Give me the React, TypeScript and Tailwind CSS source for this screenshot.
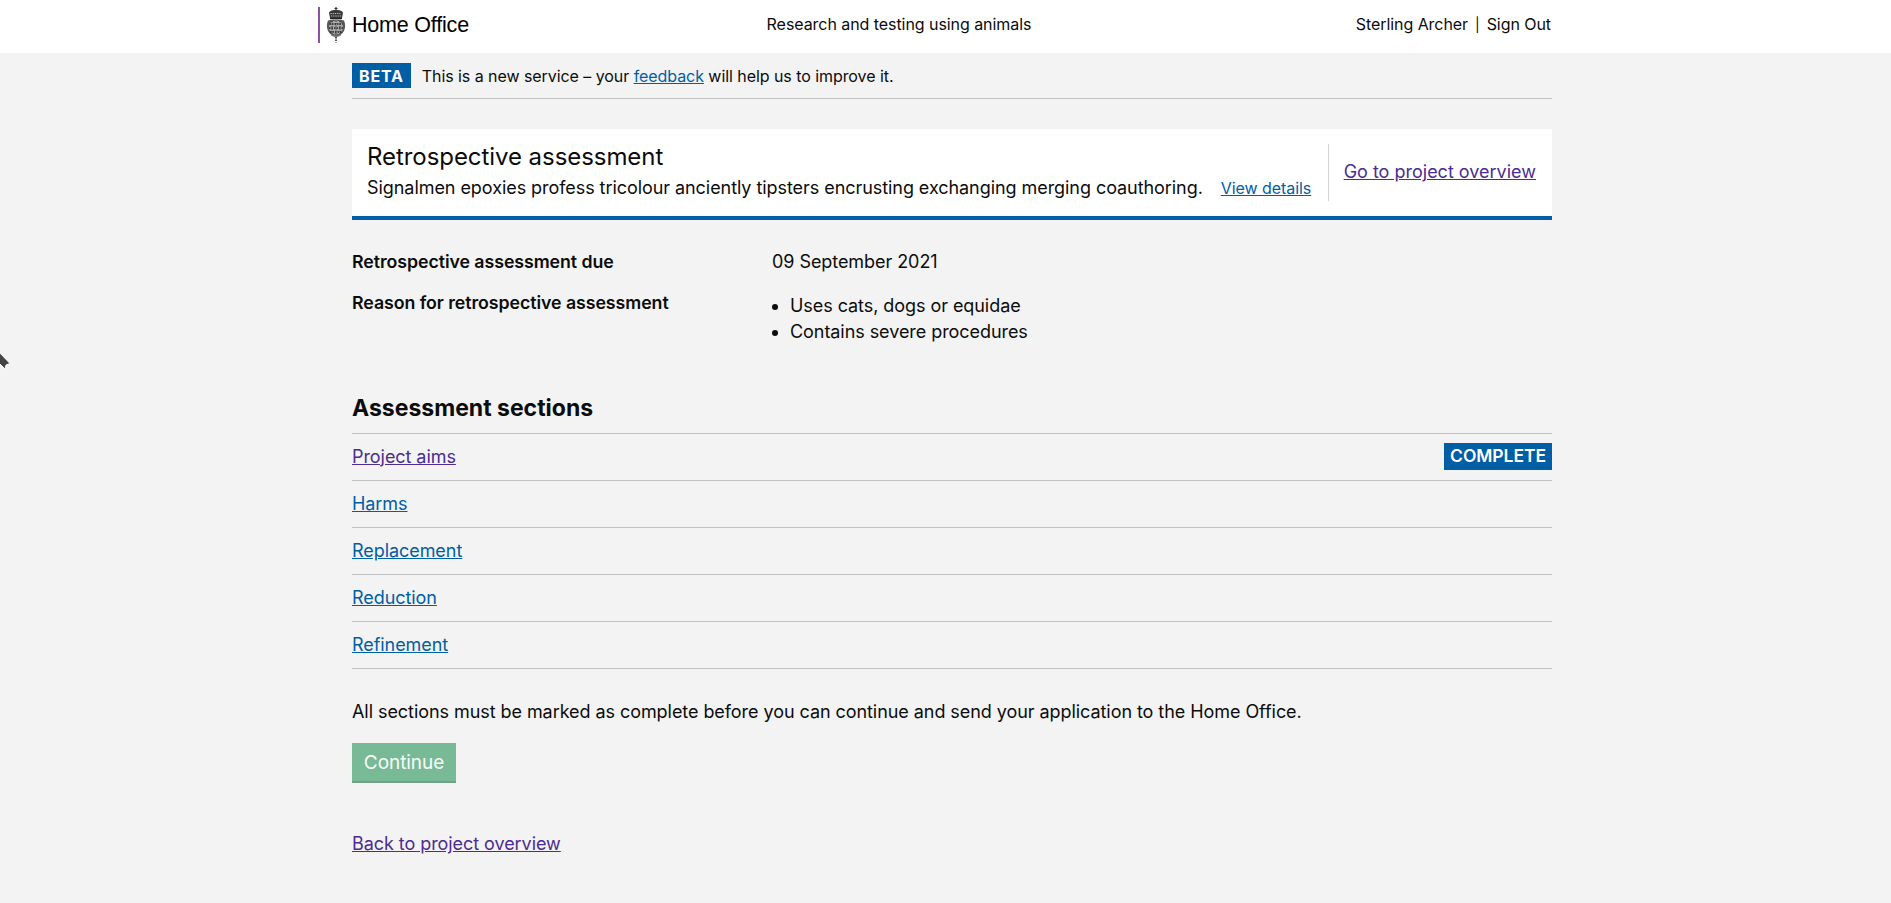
import React from 'react';

const sections = [
  { name: 'Project aims', complete: true },
  { name: 'Harms', complete: false },
  { name: 'Replacement', complete: false },
  { name: 'Reduction', complete: false },
  { name: 'Refinement', complete: false },
];

const Crest = () => (
  <svg width="20" height="36" viewBox="0 0 20 36" className="shrink-0">
    {/* crown */}
    <path d="M10 0v3M8.500 1.500h3" stroke="#333" strokeWidth="1.200" fill="none" />
    <path d="M3 5.500C4 3.500 7 3 10 3s6 .5 7 2.500L16 11H4z" fill="#3a3a3a" />
    <path d="M4.500 6.500h11M5 9h10" stroke="#ccc" strokeWidth="0.9" strokeDasharray="1.200 1" />
    <path d="M4 11.500h12" stroke="#222" strokeWidth="1.200" />
    {/* shield with garter */}
    <path d="M2 13.500C4 12 16 12 18 13.500c1.500 3 1.500 7.500 0 10.500-1.500 3-4.500 5-8 6.500-3.500-1.500-6.500-3.500-8-6.500-1.500-3-1.500-7.500 0-10.500z" fill="#5a5a5a" />
    <circle cx="10" cy="20.500" r="7" fill="#aaa" />
    <path d="M3.500 17h13M3 21h14M4 25h12" stroke="#222" strokeWidth="1.300" strokeDasharray="1.500 1" />
    <path d="M6 14v13M10 13.500v14M14 14v13" stroke="#333" strokeWidth="1.100" strokeDasharray="1.200 1.300" />
    <path d="M5 28c3 1.500 7 1.500 10 0" stroke="#888" strokeWidth="1.200" fill="none" />
    <path d="M10 30v5.500" stroke="#444" strokeWidth="1.800" strokeDasharray="1.500 1" />
  </svg>
);

const App: React.FC = () => {
  return (
    <div className="relative min-h-[903px] bg-[#f3f3f3] font-['Inter',sans-serif] text-[#0b0c0c] text-[18px] tracking-[-0.06px] overflow-hidden">
      {/* mouse cursor left over in the screenshot */}
      <svg width="12" height="22" viewBox="0 0 12 22" className="absolute left-0 top-[350px]">
        <path d="M-3 0L10 13.500 6 15 5 19 0 14H-3z" fill="#444" stroke="#fff" strokeWidth="1" />
      </svg>

      <header className="h-[53px] bg-white">
        <div className="w-[1234px] ml-[318px] h-[48px] grid grid-cols-[1fr_auto_1fr] items-center">
          <div className="flex items-center h-[36px] mt-[1px] border-l-2 border-[#8f4fa5] pl-[6px] gap-[6px]">
            <Crest />
            <span className="mt-[2px] font-['Liberation_Sans',sans-serif] text-[21.500px] tracking-[-0.2px] text-black">Home Office</span>
          </div>
          <div className="text-base pr-[72px]">Research and testing using animals</div>
          <div className="text-base text-right pr-[1px]">
            Sterling Archer<span className="mx-[7px] text-sm">|</span>Sign Out
          </div>
        </div>
      </header>

      <main className="w-[1200px] ml-[352px]">
        <div className="h-[46px] flex items-center gap-[11px] border-b border-[#bfc1c3] text-base">
          <span className="bg-[#005ea5] text-white font-bold px-[7px] h-[25px] flex items-center tracking-[0.8px]">BETA</span>
          <p>
            This is a new service – your <a href="#" className="underline text-[#005ea5]">feedback</a> will help us to improve it.
          </p>
        </div>

        <div className="mt-[30px] bg-white border-b-4 border-[#005ea5] h-[91px] flex items-center justify-between pl-[15px] pr-4">
          <div className="flex items-end mt-[1px]">
            <div>
              <h1 className="text-[24px] leading-[30px] -mt-[4px] mb-[3px]">Retrospective assessment</h1>
              <p className="leading-[26px]">Signalmen epoxies profess tricolour anciently tipsters encrusting exchanging merging coauthoring.</p>
            </div>
            <a href="#" className="ml-[18px] text-base leading-[26px] underline text-[#005ea5]">View details</a>
          </div>
          <div className="h-[57px] border-l border-[#d5d5d5] pl-[15px] pb-[2px] flex items-center">
            <a href="#" className="tracking-normal underline text-[#4c2c92]">Go to project overview</a>
          </div>
        </div>

        <dl className="mt-[29px] grid grid-cols-[420px_1fr] gap-y-[15px]">
          <dt className="text-[17.750px] font-semibold leading-[26px]">Retrospective assessment due</dt>
          <dd className="leading-[26px]">09 September 2021</dd>
          <dt className="text-[17.750px] font-semibold leading-[26px]">Reason for retrospective assessment</dt>
          <dd>
            <ul className="list-disc pl-[18px] pt-[3px] leading-[26px]">
              <li>Uses cats, dogs or equidae</li>
              <li>Contains severe procedures</li>
            </ul>
          </dd>
        </dl>

        <h2 className="mt-[48px] text-[23px] font-bold tracking-normal leading-[30px] pb-[10px]">Assessment sections</h2>
        <ul className="border-t border-[#bfc1c3]">
          {sections.map((s) => (
            <li key={s.name} className="h-[47px] border-b border-[#bfc1c3] flex items-center justify-between">
              <a href="#" className={s.complete ? 'mb-[2px] underline text-[#4c2c92]' : 'mb-[2px] underline text-[#005ea5]'}>{s.name}</a>
              {s.complete && (
                <span className="mb-[1px] bg-[#005ea5] text-white font-semibold text-[17.500px] px-[6px] h-[27px] flex items-center">COMPLETE</span>
              )}
            </li>
          ))}
        </ul>

        <p className="mt-[30px] leading-[26px]">
          All sections must be marked as complete before you can continue and send your application to the Home Office.
        </p>
        <button className="mt-[18px] block w-[104px] h-[40px] pt-[3px] bg-[#79ba96] border-b-2 border-[#73a088] text-[#f8fcf9] text-[19px]">Continue</button>
        <a href="#" className="mt-[47px] inline-block underline text-[#4c2c92]">Back to project overview</a>
      </main>
    </div>
  );
};

export default App;
